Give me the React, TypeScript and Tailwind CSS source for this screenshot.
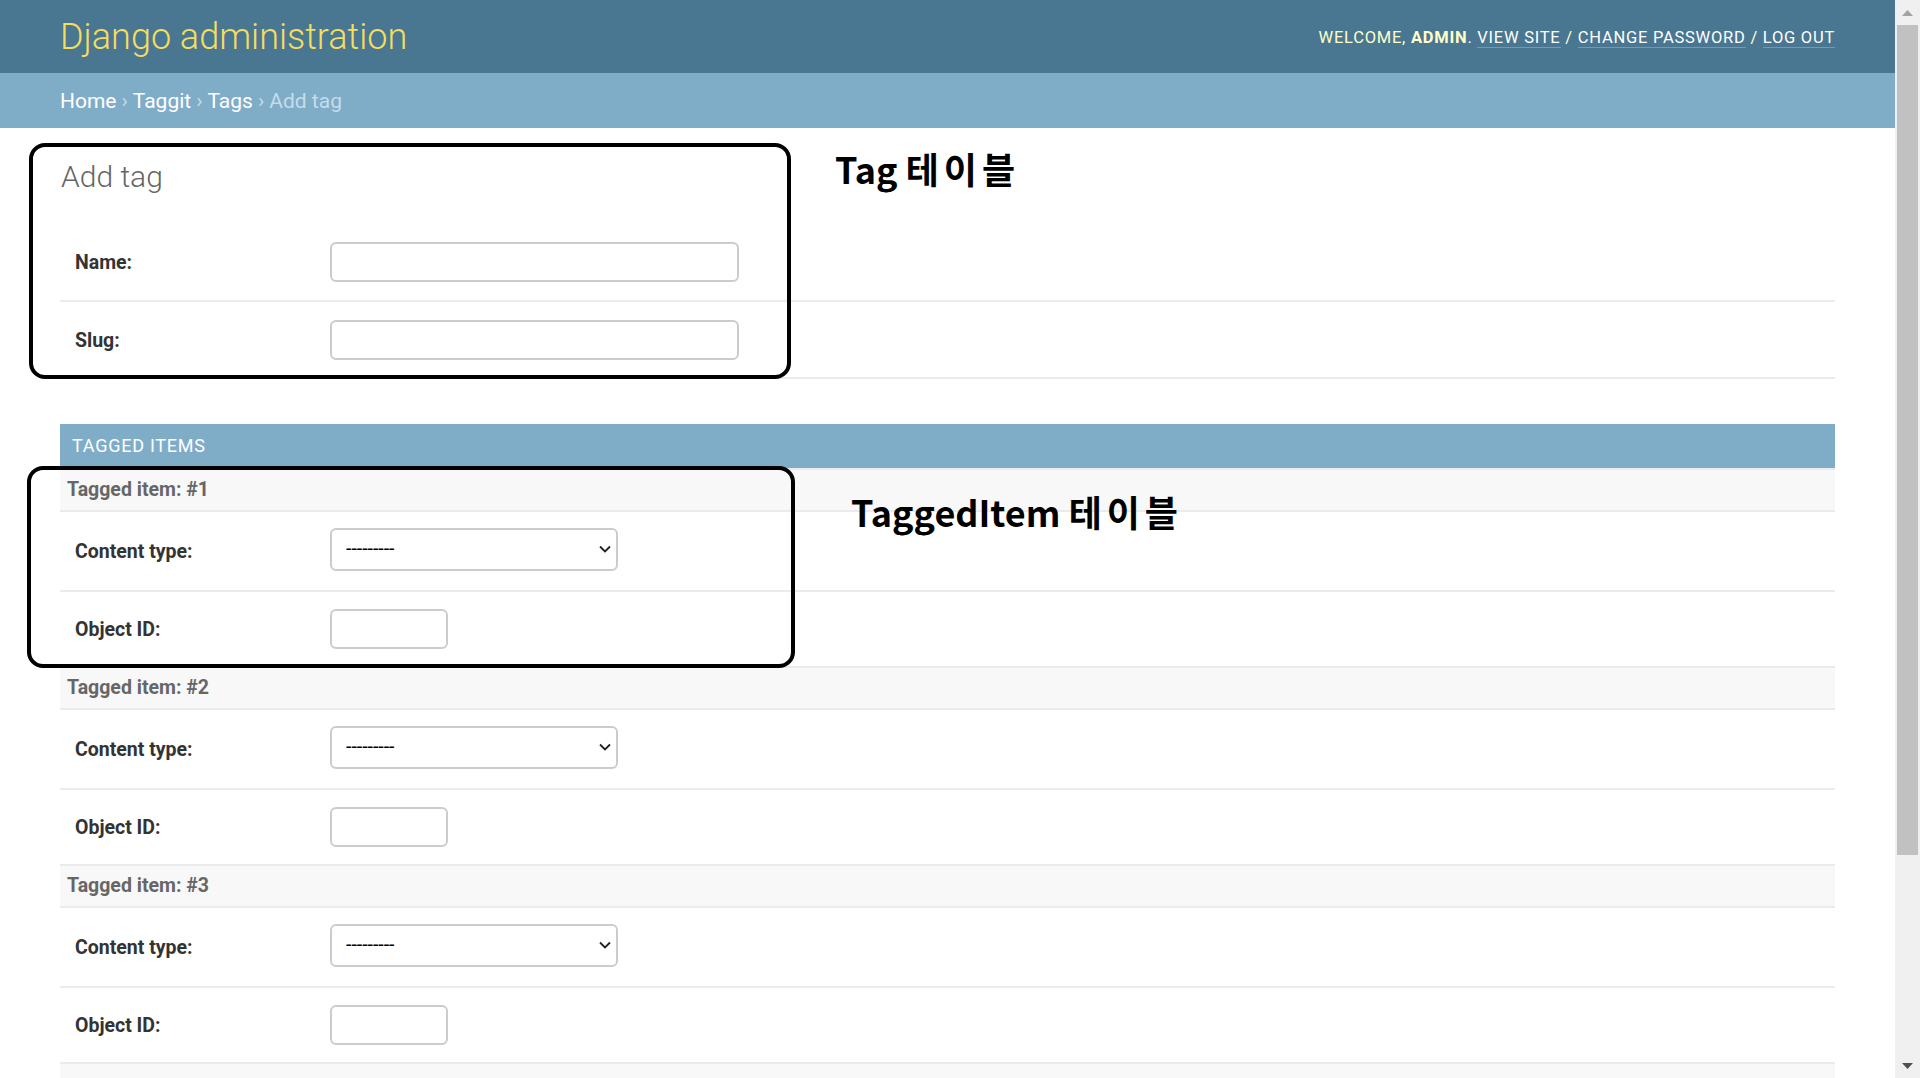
import React from "react";

function Chevron() {
  return (
    <svg width="12" height="8" viewBox="0 0 12 8">
      <path d="M1 1.5 L6 6.5 L11 1.5" fill="none" stroke="#222" strokeWidth="1.8" />
    </svg>
  );
}

function TextInput({ w }: { w: string }) {
  return <input type="text" className={`h-[40px] ${w} rounded-[6px] border-2 border-[#cccccc] bg-white`} />;
}

function SelectBox() {
  return (
    <div className="mb-[4px] flex h-[43px] w-[288px] items-center justify-between rounded-[6px] border-2 border-[#cccccc] bg-white pl-[14px] pr-[5px]">
      <span className="text-[19.5px] leading-none text-black">---------</span>
      <Chevron />
    </div>
  );
}

function Label({ children }: { children: React.ReactNode }) {
  return <div className="w-[255px] shrink-0 pt-[2px] text-[19.5px] font-bold leading-none text-[#333]">{children}</div>;
}

function ItemTitle({ children }: { children?: React.ReactNode }) {
  return (
    <div className="flex h-[44px] items-center border-y-2 border-[#ebebeb] bg-[#f8f8f8] pl-[7px] text-[19.5px] font-bold leading-none text-[#666]">
      {children}
    </div>
  );
}

function InlineItem({ n }: { n: number }) {
  return (
    <div>
      <ItemTitle>Tagged item: #{n}</ItemTitle>
      <div className="flex h-[80px] items-center border-b-2 border-[#ebebeb] pl-[15px]">
        <Label>Content type:</Label>
        <SelectBox />
      </div>
      <div className="flex h-[74px] items-center pl-[15px]">
        <Label>Object ID:</Label>
        <TextInput w="w-[118px]" />
      </div>
    </div>
  );
}

export default function App() {
  return (
    <div className="flex h-[1078px] w-full overflow-hidden bg-white font-['Roboto',sans-serif]">
      <div className="relative min-w-0 flex-1 overflow-hidden">
        <header className="flex h-[73px] items-center justify-between bg-[#497792] px-[60px]">
          <div className="text-[36px] font-light leading-none text-[#f5dd5d]">Django administration</div>
          <div className="pt-[4px] text-[16.5px] uppercase leading-none tracking-[0.75px] text-[#ffffcc]">
            Welcome, <strong className="font-bold">admin</strong>.{" "}
            <a className="border-b border-[rgba(255,255,255,0.25)] text-white">View site</a> /{" "}
            <a className="border-b border-[rgba(255,255,255,0.25)] text-white">Change password</a> /{" "}
            <a className="border-b border-[rgba(255,255,255,0.25)] text-white">Log out</a>
          </div>
        </header>
        <div className="flex h-[55px] items-center bg-[#7fadc8] px-[60px] pt-[2px] text-[21px] leading-none text-[#c4dce8]">
          <a className="text-white">Home</a>
          <span className="px-[5px]">›</span>
          <a className="text-white">Taggit</a>
          <span className="px-[5px]">›</span>
          <a className="text-white">Tags</a>
          <span className="px-[5px]">›</span>
          <span>Add tag</span>
        </div>
        <div className="px-[60px] pt-[34px]">
          <h1 className="ml-px text-[30px] font-light leading-none text-[#666]">Add tag</h1>
          <div className="mt-[32px]">
            <div className="flex h-[78px] items-center border-b-2 border-[#ebebeb] pl-[15px]">
              <Label>Name:</Label>
              <TextInput w="w-[409px]" />
            </div>
            <div className="flex h-[77px] items-center border-b-2 border-[#ebebeb] pl-[15px]">
              <Label>Slug:</Label>
              <TextInput w="w-[409px]" />
            </div>
          </div>
          <div className="mt-[45px]">
            <div className="flex h-[44px] items-center bg-[#7fadc8] pl-[12px] text-[18px] uppercase leading-none tracking-[0.75px] text-white">
              Tagged items
            </div>
            {[1, 2, 3].map((n) => (
              <InlineItem key={n} n={n} />
            ))}
            <ItemTitle />
          </div>
        </div>

        <div className="absolute left-[29px] top-[143px] h-[236px] w-[762px] rounded-[16px] border-4 border-black" />
        <div className="absolute left-[27px] top-[466px] h-[202px] w-[768px] rounded-[16px] border-4 border-black" />
        <div className="absolute left-[835px] top-[150px] font-['Noto_Sans_CJK_KR',sans-serif] text-[36px] font-bold leading-none text-black">
          Tag <span className="tracking-[5px]">테이블</span>
        </div>
        <div className="absolute left-[851px] top-[493px] font-['Noto_Sans_CJK_KR',sans-serif] text-[36px] font-bold leading-none text-black">
          TaggedItem <span className="tracking-[5px]">테이블</span>
        </div>
      </div>

      <div className="flex h-full w-[25px] shrink-0 flex-col bg-[#f0f0f0]">
        <div className="flex h-[25px] items-center justify-center">
          <svg width="11" height="6" viewBox="0 0 11 6">
            <path d="M0 6 L5.5 0 L11 6 Z" fill="#a3a3a3" />
          </svg>
        </div>
        <div className="mx-[2px] h-[830px] bg-[#c1c1c1]" />
        <div className="flex-1" />
        <div className="flex h-[25px] items-center justify-center">
          <svg width="11" height="6" viewBox="0 0 11 6">
            <path d="M0 0 L11 0 L5.5 6 Z" fill="#505050" />
          </svg>
        </div>
      </div>
    </div>
  );
}
